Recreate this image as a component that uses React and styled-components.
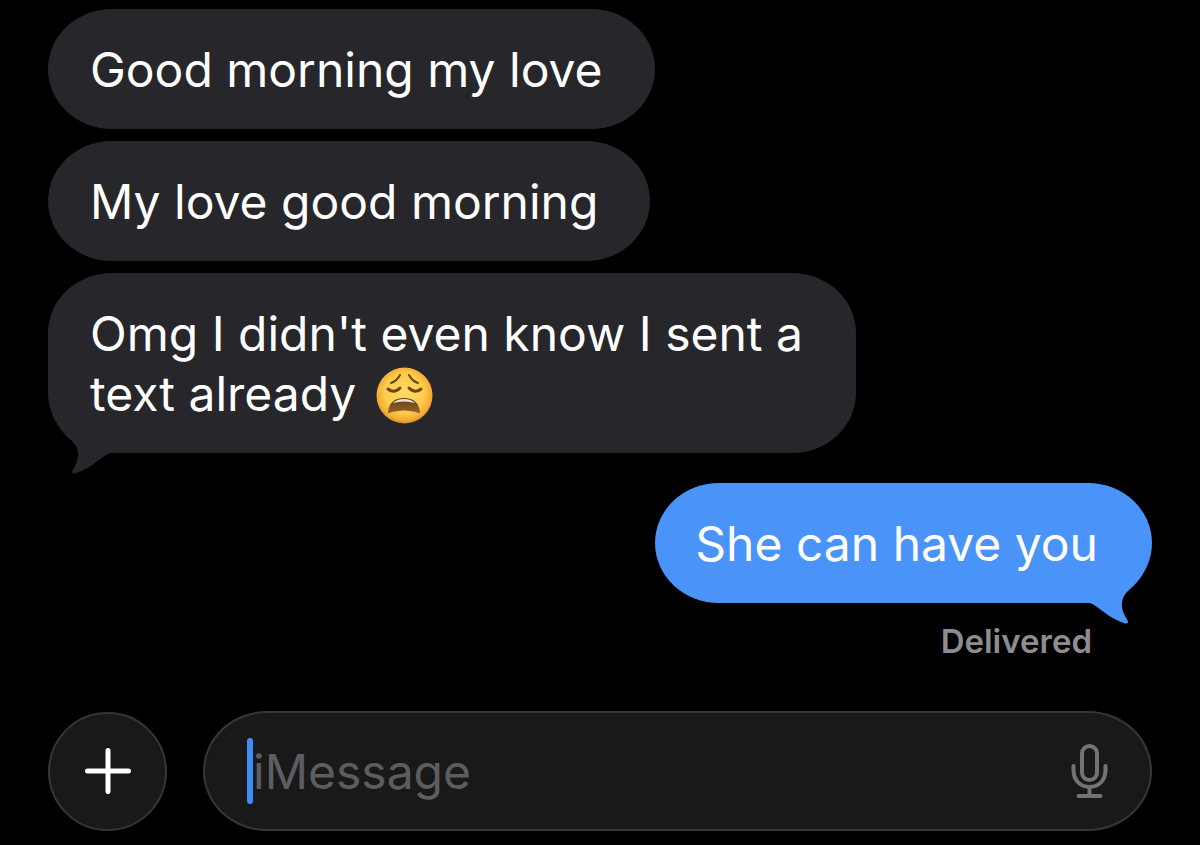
import React from 'react';
import styled, { createGlobalStyle } from 'styled-components';

const GlobalStyle = createGlobalStyle`
  * {
    box-sizing: border-box;
  }

  body {
    margin: 0;
    background-color: #000;
    font-family: Inter, "Liberation Sans", sans-serif;
  }
`;

const Screen = styled.main`
  display: flex;
  flex-direction: column;
  min-height: 100vh;
  padding: 9px 48px 14px;
`;

const Thread = styled.ol`
  display: flex;
  flex: 1;
  flex-direction: column;
  gap: 12px;
  margin: 0;
  padding: 0;
  list-style: none;
`;

const Message = styled.li`
  display: flex;
  flex-direction: column;
  align-items: ${({ $sent }) => ($sent ? 'flex-end' : 'flex-start')};
  margin-top: ${({ $sent }) => ($sent ? '18px' : '0')};
`;

const Bubble = styled.p`
  position: relative;
  max-width: 808px;
  margin: 0;
  padding: ${({ $sent }) => ($sent ? '31px 54px 29px 40px' : '31px 52px 29px 42px')};
  border-radius: 64px / 60px;
  background-color: ${({ $sent }) => ($sent ? '#4a93f8' : '#27262b')};
  color: #fff;
  font-size: 48px;
  line-height: 60px;
`;

const Tail = styled.svg`
  position: absolute;
  bottom: -24px;
  ${({ $sent }) => ($sent ? 'right: 0;' : 'left: 0;')}
  transform: ${({ $sent }) => ($sent ? 'scaleX(-1)' : 'none')};
  fill: ${({ $sent }) => ($sent ? '#4a93f8' : '#27262b')};
`;

/* Negative margins keep the emoji from stretching its line */
const Emoji = styled.svg`
  margin: -4px 0 -4px 6px;
  vertical-align: -9px;
`;

const Status = styled.span`
  padding: 18px 60px 0 0;
  color: #8d8c92;
  font-size: 33px;
  font-weight: 600;
  line-height: 40px;
`;

const Composer = styled.form`
  display: flex;
  align-items: center;
  gap: 36px;
`;

const AddButton = styled.button`
  display: flex;
  flex: none;
  align-items: center;
  justify-content: center;
  width: 119px;
  height: 119px;
  padding: 0;
  border: 2px solid #363636;
  border-radius: 50%;
  background-color: #191919;
  color: #fff;
`;

const Field = styled.div`
  display: flex;
  flex: 1;
  align-items: center;
  min-width: 0;
  height: 120px;
  padding: 0 40px 0 42px;
  border: 2px solid #363636;
  border-radius: 64px / 60px;
  background-color: #191919;
`;

const Caret = styled.span`
  flex: none;
  width: 6px;
  height: 66px;
  border-radius: 3px;
  background-color: #3f8df8;
`;

const TextInput = styled.input`
  flex: 1;
  min-width: 0;
  padding: 2px 0 0;
  border: 0;
  outline: 0;
  background: none;
  color: #fff;
  caret-color: transparent;
  font-family: inherit;
  font-size: 48px;
  line-height: 60px;

  &::placeholder {
    color: #5d5d60;
    opacity: 1;
  }
`;

const MicButton = styled.button`
  display: flex;
  flex: none;
  padding: 0;
  border: 0;
  background: none;
  color: #737376;
`;

const BubbleTail = ({ sent }) => (
  <Tail $sent={sent} width="66" height="56" viewBox="0 -32 66 56" aria-hidden="true">
    <path d="M9 -29C13 -23 18 -17 24 -12C31 -6 32 4 27 13L24.500 17.500C23 20 25 21.500 28 20C38 17 47 10 55 4C58 2 60 0 64 0V-29Z" />
  </Tail>
);

const WearyFace = () => (
  <Emoji width="57" height="57" viewBox="0 0 57 57" role="img" aria-label="weary face">
    <defs>
      <radialGradient id="face" cx="50%" cy="46%" r="54%">
        <stop offset="0" stopColor="#ffdc62" />
        <stop offset="0.65" stopColor="#fdcb4c" />
        <stop offset="0.9" stopColor="#f3ab35" />
        <stop offset="1" stopColor="#dc8b2b" />
      </radialGradient>
      <linearGradient id="mouth" x1="0" y1="0" x2="0" y2="1">
        <stop offset="0" stopColor="#634118" />
        <stop offset="1" stopColor="#946124" />
      </linearGradient>
    </defs>
    <circle cx="28.500" cy="28.500" r="28" fill="url(#face)" />
    <g fill="none" stroke="#6b430f" strokeLinecap="round">
      <path d="M15 16Q21 14 24 8" strokeWidth="2" />
      <path d="M42 16Q36 14 33 8" strokeWidth="2" />
      <path d="M12 22Q18 27 24 21" strokeWidth="3" />
      <path d="M45 22Q39 27 33 21" strokeWidth="3" />
    </g>
    <path d="M12 45C13 36 18 31 28 31S43 36 44 45C44 47 42 46 40 45Q28 42 16 45C14 46 12 47 12 45Z" fill="url(#mouth)" />
    <path d="M17 36Q21 32 28 32T39 36Q28 33 17 36Z" fill="#e6e0d6" />
  </Emoji>
);

const PlusIcon = () => (
  <svg width="48" height="48" viewBox="0 0 48 48" fill="none" stroke="currentColor" strokeWidth="5" strokeLinecap="round" aria-hidden="true">
    <path d="M24 3.500V44.500M3.500 24H44.500" />
  </svg>
);

const MicIcon = () => (
  <svg width="40" height="56" viewBox="0 0 40 56" fill="none" stroke="currentColor" strokeWidth="4" strokeLinecap="round" aria-hidden="true">
    <rect x="12" y="3" width="15" height="34" rx="7.500" />
    <path d="M3.500 23V27C3.500 37 10 44 19.500 44S35.500 37 35.500 27V23M19.500 44V53M8.500 53H30.500" />
  </svg>
);

const App = () => (
  <>
    <GlobalStyle />
    <Screen>
      <Thread>
        <Message>
          <Bubble>Good morning my love</Bubble>
        </Message>
        <Message>
          <Bubble>My love good morning</Bubble>
        </Message>
        <Message>
          <Bubble>
            Omg I didn't even know I sent a text already <WearyFace />
            <BubbleTail />
          </Bubble>
        </Message>
        <Message $sent>
          <Bubble $sent>
            She can have you
            <BubbleTail sent />
          </Bubble>
          <Status>Delivered</Status>
        </Message>
      </Thread>
      <Composer onSubmit={(e) => e.preventDefault()}>
        <AddButton type="button" aria-label="Add attachment">
          <PlusIcon />
        </AddButton>
        <Field>
          <Caret />
          <TextInput type="text" placeholder="iMessage" aria-label="iMessage" />
          <MicButton type="button" aria-label="Dictate">
            <MicIcon />
          </MicButton>
        </Field>
      </Composer>
    </Screen>
  </>
);

export default App;
